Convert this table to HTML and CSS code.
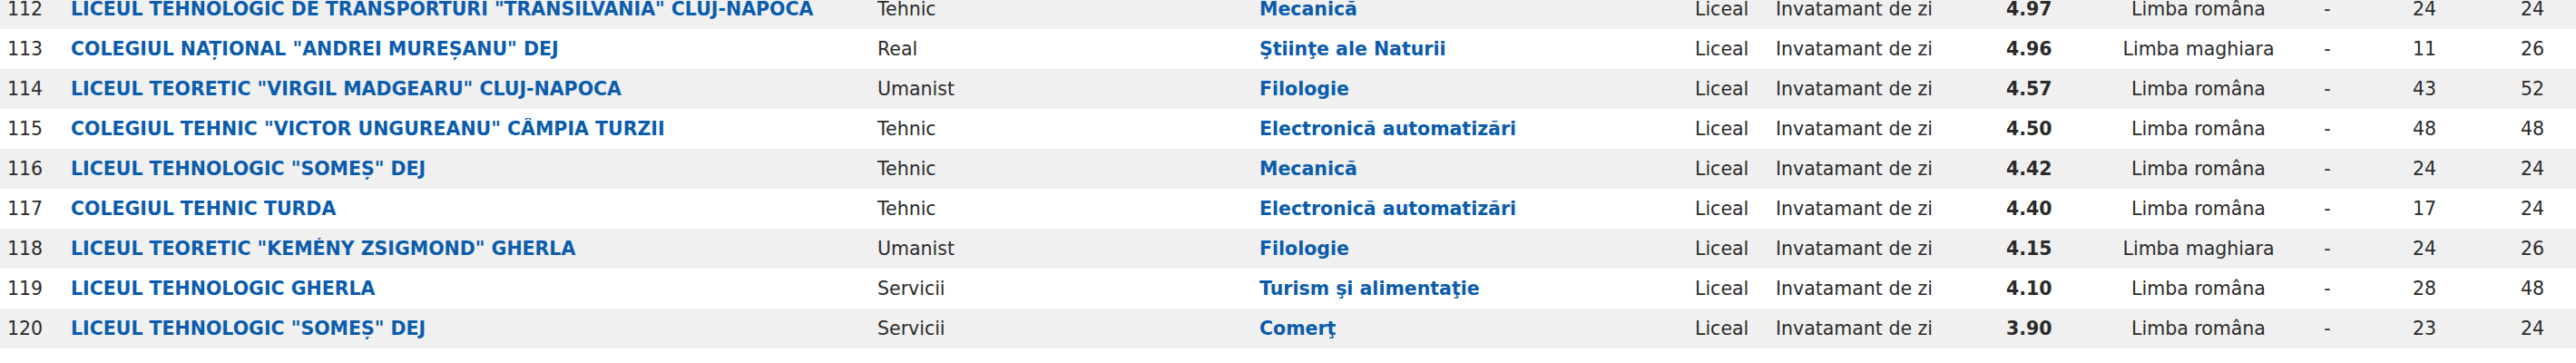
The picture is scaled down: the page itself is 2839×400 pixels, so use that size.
FILE: index.html
```html
<!DOCTYPE html>
<html lang="ro">
<head>
<meta charset="utf-8">
<title>Rezultate</title>
<link rel="stylesheet" href="styles.css">
</head>
<body>
<div class="list">
  <div class="row alt"><span class="c nr">112</span><a class="c name">LICEUL TEHNOLOGIC DE TRANSPORTURI "TRANSILVANIA" CLUJ-NAPOCA</a><span class="c prof">Tehnic</span><a class="c spec">Mecanică</a><span class="c niv">Liceal</span><span class="c forma">Invatamant de zi</span><span class="c med">4.97</span><span class="c lb">Limba româna</span><span class="c dash">-</span><span class="c n1">24</span><span class="c n2">24</span></div>
  <div class="row"><span class="c nr">113</span><a class="c name">COLEGIUL NAȚIONAL "ANDREI MUREȘANU" DEJ</a><span class="c prof">Real</span><a class="c spec">Ştiinţe ale Naturii</a><span class="c niv">Liceal</span><span class="c forma">Invatamant de zi</span><span class="c med">4.96</span><span class="c lb">Limba maghiara</span><span class="c dash">-</span><span class="c n1">11</span><span class="c n2">26</span></div>
  <div class="row alt"><span class="c nr">114</span><a class="c name">LICEUL TEORETIC "VIRGIL MADGEARU" CLUJ-NAPOCA</a><span class="c prof">Umanist</span><a class="c spec">Filologie</a><span class="c niv">Liceal</span><span class="c forma">Invatamant de zi</span><span class="c med">4.57</span><span class="c lb">Limba româna</span><span class="c dash">-</span><span class="c n1">43</span><span class="c n2">52</span></div>
  <div class="row"><span class="c nr">115</span><a class="c name">COLEGIUL TEHNIC "VICTOR UNGUREANU" CÂMPIA TURZII</a><span class="c prof">Tehnic</span><a class="c spec">Electronică automatizări</a><span class="c niv">Liceal</span><span class="c forma">Invatamant de zi</span><span class="c med">4.50</span><span class="c lb">Limba româna</span><span class="c dash">-</span><span class="c n1">48</span><span class="c n2">48</span></div>
  <div class="row alt"><span class="c nr">116</span><a class="c name">LICEUL TEHNOLOGIC "SOMEȘ" DEJ</a><span class="c prof">Tehnic</span><a class="c spec">Mecanică</a><span class="c niv">Liceal</span><span class="c forma">Invatamant de zi</span><span class="c med">4.42</span><span class="c lb">Limba româna</span><span class="c dash">-</span><span class="c n1">24</span><span class="c n2">24</span></div>
  <div class="row"><span class="c nr">117</span><a class="c name">COLEGIUL TEHNIC TURDA</a><span class="c prof">Tehnic</span><a class="c spec">Electronică automatizări</a><span class="c niv">Liceal</span><span class="c forma">Invatamant de zi</span><span class="c med">4.40</span><span class="c lb">Limba româna</span><span class="c dash">-</span><span class="c n1">17</span><span class="c n2">24</span></div>
  <div class="row alt"><span class="c nr">118</span><a class="c name">LICEUL TEORETIC "KEMÉNY ZSIGMOND" GHERLA</a><span class="c prof">Umanist</span><a class="c spec">Filologie</a><span class="c niv">Liceal</span><span class="c forma">Invatamant de zi</span><span class="c med">4.15</span><span class="c lb">Limba maghiara</span><span class="c dash">-</span><span class="c n1">24</span><span class="c n2">26</span></div>
  <div class="row"><span class="c nr">119</span><a class="c name">LICEUL TEHNOLOGIC GHERLA</a><span class="c prof">Servicii</span><a class="c spec">Turism şi alimentaţie</a><span class="c niv">Liceal</span><span class="c forma">Invatamant de zi</span><span class="c med">4.10</span><span class="c lb">Limba româna</span><span class="c dash">-</span><span class="c n1">28</span><span class="c n2">48</span></div>
  <div class="row alt"><span class="c nr">120</span><a class="c name">LICEUL TEHNOLOGIC "SOMEȘ" DEJ</a><span class="c prof">Servicii</span><a class="c spec">Comerţ</a><span class="c niv">Liceal</span><span class="c forma">Invatamant de zi</span><span class="c med">3.90</span><span class="c lb">Limba româna</span><span class="c dash">-</span><span class="c n1">23</span><span class="c n2">24</span></div>
</div>
</body>
</html>
```
FILE: styles.css
```css
html, body {
  margin: 0;
  padding: 0;
  background: #ffffff;
}
body {
  font-family: "DejaVu Sans", Verdana, sans-serif;
  font-size: 20.5px;
  color: #2b2b2b;
  overflow: hidden;
}
.list {
  margin-top: -12px;
}
.row {
  display: grid;
  grid-template-columns: 70px 889px 421px 480px 89px 254px 127px 186px 98px 116px 109px;
  height: 44px;
  align-items: center;
  background: #ffffff;
}
.row.alt {
  background: #f0f0f0;
}
.c {
  padding-left: 8px;
  white-space: nowrap;
  overflow: hidden;
}
.name, .spec {
  color: #0b5cad;
  font-weight: bold;
  text-decoration: none;
}
.med {
  font-weight: bold;
}
.lb, .dash, .n1 {
  text-align: center;
  padding-left: 0;
}
.n2 {
  text-align: center;
  padding-left: 13px;
}
```
